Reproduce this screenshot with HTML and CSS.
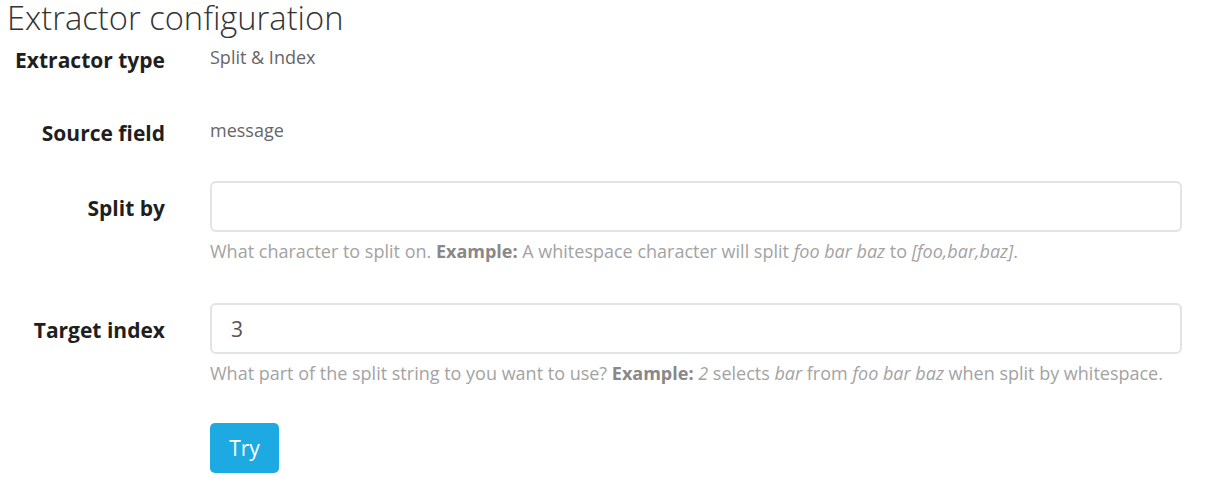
FILE: index.html
```html
<!DOCTYPE html>
<html lang="en">
<head>
<meta charset="utf-8">
<title>Extractor configuration</title>
<link rel="stylesheet" href="styles.css">
</head>
<body>
<div class="page">
  <h2 class="title">Extractor configuration</h2>
  <form class="form">
    <div class="row row-static">
      <div class="label">Extractor type</div>
      <div class="control"><p class="static">Split &amp; Index</p></div>
    </div>
    <div class="row row-static">
      <div class="label">Source field</div>
      <div class="control"><p class="static">message</p></div>
    </div>
    <div class="row">
      <label class="label" for="split-by">Split by</label>
      <div class="control">
        <input class="input" id="split-by" type="text" value="">
        <p class="help">What character to split on. <strong>Example:</strong> A whitespace character will split <em>foo bar baz</em> to <em>[foo,bar,baz]</em>.</p>
      </div>
    </div>
    <div class="row">
      <label class="label" for="target-index">Target index</label>
      <div class="control">
        <input class="input" id="target-index" type="text" value="3">
        <p class="help">What part of the split string to you want to use? <strong>Example:</strong> <em>2</em> selects <em>bar</em> from <em>foo bar baz</em> when split by whitespace.</p>
      </div>
    </div>
    <div class="row row-actions">
      <div class="label"></div>
      <div class="control"><button class="btn" type="button">Try</button></div>
    </div>
  </form>
</div>
</body>
</html>
```

FILE: styles.css
```css
* { box-sizing: border-box; }
html, body { margin: 0; padding: 0; background: #fff; }
body {
  font-family: "Open Sans", "Liberation Sans", sans-serif;
  color: #1f1f1f;
}
.page { padding: 0 42px 0 7px; }
.title {
  margin: 0;
  font-size: 32.7px;
  font-weight: 300;
  line-height: 35px;
  color: #333;
  height: 35px;
}
.form { display: flex; flex-direction: column; padding-left: 1px; }
.row {
  display: grid;
  grid-template-columns: 202px 1fr;
  align-items: start;
}
.label {
  text-align: right;
  padding-right: 45px;
  font-weight: 700;
  font-size: 21px;
  color: #1f1f1f;
}
.row-static { height: 73px; }
.row-static .label { padding-top: 12px; line-height: 26px; }
.static {
  margin: 0;
  padding-top: 9px;
  font-size: 18px;
  line-height: 26px;
  color: #666;
}
.row .label[for] { padding-top: 14px; line-height: 26px; }
.input {
  display: block;
  width: 100%;
  height: 51px;
  border: 2px solid #e3e3e3;
  border-radius: 6px;
  padding: 0 19px;
  font-family: inherit;
  font-size: 21px;
  color: #555;
  background: #fff;
  outline: none;
}
.help {
  margin: 6px 0 0;
  font-size: 18px;
  line-height: 26px;
  color: #a3a3a3;
  height: 65px;
}
.help strong { color: #888; font-weight: 700; }
.row-actions { margin-top: -2px; }
.btn {
  width: 69px;
  height: 50px;
  border: 0;
  border-radius: 5px;
  background: #1daae2;
  color: #fff;
  font-family: inherit;
  font-size: 21px;
  padding: 0;
}
```
